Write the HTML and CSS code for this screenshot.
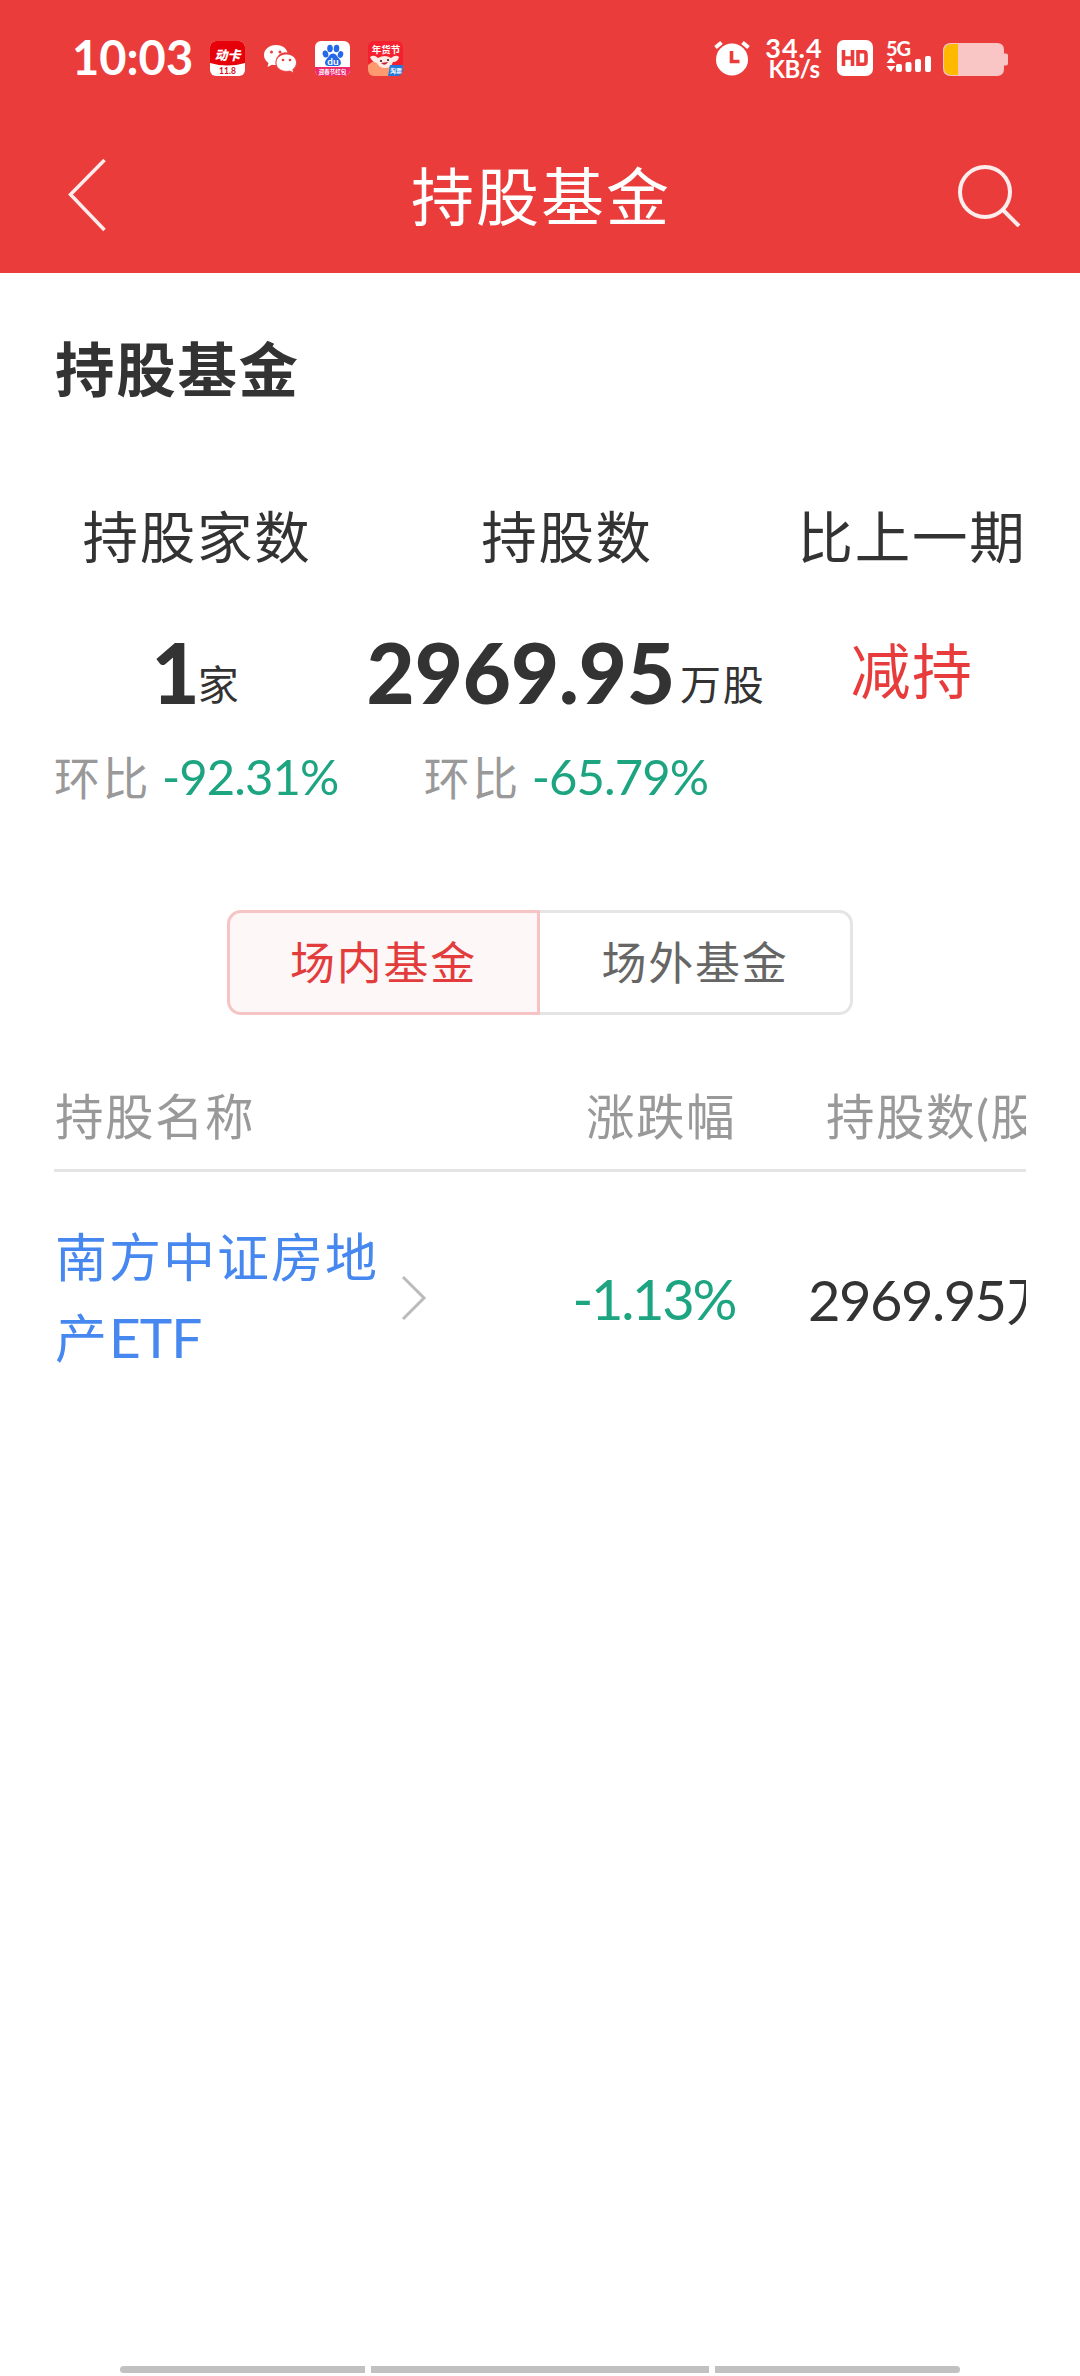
FILE: index.html
```html
<!DOCTYPE html>
<html lang="zh-CN">
<head>
<meta charset="utf-8">
<title>持股基金</title>
<link rel="stylesheet" href="styles.css">
</head>
<body>
<header class="header">
  <div class="status">
    <div class="status-left">
      <span class="clock">10:03</span>
      <svg class="app" viewBox="0 0 35 35">
        <clipPath id="r"><rect width="35" height="35" rx="6"/></clipPath>
        <g clip-path="url(#r)">
          <rect width="35" height="35" fill="#fff"/>
          <path d="M0 0h35v22q-17.500 5-35 0z" fill="#e60009"/>
          <text x="17.500" y="18.500" class="t-dong">动卡</text>
          <text x="17.500" y="33" class="t-eleven">11.8</text>
        </g>
      </svg>
      <svg class="app" viewBox="0 0 35 35">
        <path d="M13 4C6 4 1 8.500 1 14c0 3.500 1.800 6 4.500 8L4.500 26l4.500-2.300c1.300.3 2.600.4 4 .3a10 10 0 0 1 11.500-12.500C23.500 7 19 4 13 4z" fill="#fff"/>
        <path d="M23.500 13c-6 0-10.500 3.800-10.500 8.700s4.500 8.700 10.500 8.700c1.200 0 2.300-.1 3.300-.4l4 2-1-3.500c2.300-1.700 3.700-4 3.700-6.800 0-4.900-4.500-8.700-10-8.700z" fill="#fff" stroke="#eb3c3c" stroke-width=".9"/>
        <g fill="#eb3c3c"><circle cx="8.500" cy="11" r="1.500"/><circle cx="17" cy="11" r="1.500"/><circle cx="20" cy="19" r="1.300"/><circle cx="27" cy="19" r="1.300"/></g>
      </svg>
      <svg class="app" viewBox="0 0 35 35">
        <g clip-path="url(#r)">
          <rect width="35" height="35" fill="#fff"/>
          <g fill="#2468e8">
            <ellipse cx="10.500" cy="13" rx="2.800" ry="3.600" transform="rotate(-15 10.500 13)"/>
            <ellipse cx="15" cy="7.500" rx="2.800" ry="3.700"/>
            <ellipse cx="21.500" cy="7.500" rx="2.800" ry="3.700" transform="rotate(8 21.500 7.500)"/>
            <ellipse cx="25.500" cy="13.500" rx="2.700" ry="3.400" transform="rotate(15 25.500 13.500)"/>
            <path d="M18 12.500c3 0 4 3 6 5 3 3 2.500 7.500-1.500 7.500h-9c-4 0-4.500-4.500-1.500-7.500 2-2 3-5 6-5z"/>
          </g>
          <text x="18" y="23.500" class="t-du">du</text>
          <path d="M0 26h35v9h-35z" fill="#ee2a6c"/>
          <text x="17.500" y="33.200" class="t-band">迎春节红包</text>
        </g>
      </svg>
      <svg class="app" viewBox="0 0 35 35">
        <g clip-path="url(#r)">
          <rect width="35" height="35" fill="#f5202f"/>
          <path d="M0 24q9-8 18-4l10 15h-28z" fill="#ff9a70"/>
          <path d="M2 16q4-3 8 1 7-4 13 0 5-4 8-1-1 5-6 5-2 6-8 6t-8-5q-5-1-7-6z" fill="#ffe9e4"/>
          <circle cx="13" cy="20" r="1.100" fill="#222"/><circle cx="20" cy="19" r="1.100" fill="#222"/>
          <path d="M13 22q4 4 7-1z" fill="#c21f35"/>
          <text x="18" y="12" class="t-year">年货节</text>
          <path d="M22 24h13v11h-15z" fill="#2479dc"/>
          <text x="28" y="31.500" class="t-blue">淘票</text>
        </g>
      </svg>
    </div>
    <div class="status-right">
      <svg class="alarm" viewBox="0 0 36 36">
        <circle cx="18" cy="19.500" r="16" fill="#fff"/>
        <path d="M1.500 7.500 7.500 2.500M34.500 7.500 28.500 2.500" stroke="#fff" stroke-width="4"/>
        <path d="M17.500 11v10.500h8" stroke="#eb3c3c" stroke-width="3.600" fill="none"/>
      </svg>
      <span class="speed"><b>34.4</b><b class="unit-kb">KB/s</b></span>
      <svg class="hd" viewBox="0 0 36 36">
        <rect width="36" height="36" rx="7" fill="#fff"/>
        <path d="M6.500 10v16M15.500 10v16M6.500 18h9M21 11.800h5.500q2.500 0 2.500 2.500v7.400q0 2.500-2.500 2.500h-5.500z" stroke="#eb3c3c" stroke-width="3.600" fill="none"/>
      </svg>
      <svg class="signal" viewBox="0 0 46 36">
        <text x="0" y="16" class="t-5g">5G</text>
        <path d="M0.500 23 5 17.500 9.500 23zM0.500 26h9L5 31.500z" fill="#fff"/>
        <g fill="#fff"><rect x="10" y="24" width="6" height="8" rx="2"/><rect x="19.500" y="22" width="6" height="10" rx="2"/><rect x="29" y="19" width="6" height="13" rx="2"/><rect x="39" y="16" width="6" height="16" rx="2"/></g>
      </svg>
      <svg class="battery" viewBox="0 0 65 33">
        <path d="M8 0h46q7 0 7 7v3.500h2q2 0 2 2v8q0 2-2 2h-2v3.500q0 7-7 7h-46q-8 0-8-8v-17q0-8 8-8z" fill="#f9c5c5"/>
        <path d="M15 1v31H9q-8 0-8-8V9q0-8 8-8z" fill="#ffba00"/>
      </svg>
    </div>
  </div>
  <nav class="nav">
    <svg class="back" viewBox="0 0 40 74"><path d="M37.500 2 3.500 36.500 37.500 72" fill="none" stroke="#fff" stroke-opacity=".9" stroke-width="3.500"/></svg>
    <h1 class="title">持股基金</h1>
    <svg class="search" viewBox="0 0 64 64"><circle cx="28" cy="29" r="25" fill="none" stroke="#fff" stroke-opacity=".9" stroke-width="4"/><path d="M45.500 46.500 62 63" stroke="#fff" stroke-opacity=".9" stroke-width="4"/></svg>
  </nav>
</header>

<main class="content">
  <h2 class="heading">持股基金</h2>
  <section class="summary">
    <div class="stat">
      <div class="label">持股家数</div>
      <div class="value"><span class="num one">1</span><span class="unit">家</span></div>
      <div class="ratio">环比<span class="pct">-92.31%</span></div>
    </div>
    <div class="stat">
      <div class="label">持股数</div>
      <div class="value"><span class="num">2969.95</span><span class="unit">万股</span></div>
      <div class="ratio">环比<span class="pct">-65.79%</span></div>
    </div>
    <div class="stat">
      <div class="label">比上一期</div>
      <div class="change">减持</div>
    </div>
  </section>

  <div class="tabs">
    <div class="tab active">场内基金</div>
    <div class="tab">场外基金</div>
  </div>

  <section class="table">
    <div class="row head">
      <div>持股名称</div>
      <div class="right">涨跌幅</div>
      <div class="last">持股数(股)</div>
    </div>
    <div class="row body">
      <div class="name">
        <a class="link">南方中证房地产<span class="latin">ETF</span></a>
        <svg class="arrow" viewBox="0 0 26 48"><path d="M2 3 23 24 2 45" fill="none" stroke="#bbb" stroke-width="3"/></svg>
      </div>
      <div class="right green">-1.13%</div>
      <div class="amount">2969.95<span class="wan">万</span></div>
    </div>
  </section>
</main>

<footer class="gesture"><i class="side"></i><i class="mid"></i><i class="side end"></i></footer>
</body>
</html>
```
FILE: styles.css
```css
* { box-sizing: border-box; }
body {
  margin: 0;
  width: 1080px;
  height: 2376px;
  display: flex;
  flex-direction: column;
  overflow: hidden;
  background: #fff;
  color: #333;
  font-family: Lato, "Noto Sans CJK SC", sans-serif;
}
svg { display: block; flex: none; }

.header { height: 273px; background: #eb3c3c; color: #fff; }
.status {
  height: 116px;
  padding: 0 72px;
  display: flex;
  justify-content: space-between;
  align-items: center;
}
.status-left { display: flex; align-items: center; gap: 17.5px; }
.clock { width: 120.500px; font-size: 47px; font-weight: 700; line-height: 56px; margin-top: -2px; }
.app { width: 35px; height: 35px; }
.status-right { display: flex; align-items: center; }
.alarm { width: 36px; height: 36px; margin-right: 14px; }
.speed { width: 60px; margin-right: 13px; display: flex; flex-direction: column; align-items: center; }
.speed b { font-size: 27px; line-height: 21px; letter-spacing: 1px; }
.speed .unit-kb { font-size: 24px; letter-spacing: -0.500px; }
.hd { width: 36px; height: 36px; margin-right: 13px; }
.signal { width: 46px; height: 36px; margin-right: 11px; }
.battery { width: 65px; height: 33px; margin-top: 3px; }
text { font-family: Lato, "Noto Sans CJK SC", sans-serif; text-anchor: middle; font-weight: 700; fill: #fff; }
.t-dong { font-size: 13px; font-style: italic; font-weight: 900; }
.t-eleven { font-size: 8.500px; fill: #d8101c; }
.t-du { font-size: 10px; }
.t-band { font-size: 5.500px; }
.t-year { font-size: 9.500px; }
.t-blue { font-size: 6px; }
.t-5g { font-size: 20px; text-anchor: start; letter-spacing: -1px; }

.nav {
  height: 157px;
  padding: 0 59px 0 67px;
  display: flex;
  align-items: center;
  justify-content: space-between;
}
.back { width: 40px; height: 74px; }
.title { margin: 2px -18px 0 0; font-size: 63px; font-weight: 400; line-height: 70px; letter-spacing: 2px; }
.search { width: 64px; height: 64px; }

.content { flex: 1; padding: 66px 54px 0; }
.heading { margin: 0; font-size: 59.500px; font-weight: 700; line-height: 60px; letter-spacing: 1.700px; padding-left: 1px; }
.summary {
  margin-top: 108px;
  height: 300px;
  display: grid;
  grid-template-columns: 284px 396px 234px;
  column-gap: 30px;
}
.stat { text-align: center; white-space: nowrap; }
.label { font-size: 55.500px; line-height: 60px; letter-spacing: 1.700px; padding-left: 2px; }
.value { margin-top: 62px; height: 84px; display: flex; justify-content: center; align-items: baseline; }
.num { font-size: 83px; font-weight: 900; line-height: 86px; }
.num.one { margin-right: -7px; }
.unit { margin-left: 5px; font-size: 41px; line-height: 60px; letter-spacing: 1.700px; transform: translateY(-4px); }
.ratio { margin-top: 34px; font-size: 46px; line-height: 58px; letter-spacing: 2.500px; color: #999; }
.pct { margin-left: 11px; font-size: 49px; letter-spacing: -0.900px; color: #1da481; }
.change { margin-top: 62px; font-size: 60px; line-height: 84px; letter-spacing: 1.500px; padding-left: 2px; color: #e83c3c; }

.tabs {
  width: 626px;
  height: 105px;
  margin: 103px auto 0;
  display: grid;
  grid-template-columns: 1fr 1fr;
}
.tab {
  height: 105px;
  border: 3px solid #e5e5e5;
  border-left: 0;
  border-radius: 0 14px 14px 0;
  text-align: center;
  font-size: 45px;
  line-height: 101px;
  letter-spacing: 1.800px;
  color: #666;
}
.tab.active { border: 3px solid #f6c4c4; border-radius: 14px 0 0 14px; background: #fef7f7; color: #e23c3c; }

.table { margin-top: 71px; overflow: hidden; white-space: nowrap; }
.row { width: 1010px; display: grid; grid-template-columns: 390px 291px 329px; align-items: center; }
.head {
  height: 86px;
  padding-bottom: 23px;
  border-bottom: 3px solid #e5e5e5;
  font-size: 48.500px;
  line-height: 58px;
  letter-spacing: 1.500px;
  color: #999;
  padding-left: 1px;
}
.right { text-align: right; }
.last { padding-left: 90px; }
.body { margin-top: 45px; height: 162px; font-size: 56px; letter-spacing: -1.500px; }
.name { display: flex; align-items: center; gap: 20px; }
.link { width: 328px; padding-left: 1px; font-size: 52px; line-height: 81px; letter-spacing: 2px; white-space: normal; word-break: break-all; color: #4688f0; }
.latin { font-size: 55px; line-height: 60px; letter-spacing: -1px; }
.arrow { width: 26px; height: 48px; margin-left: -1px; }
.green { letter-spacing: -2.300px; color: #1da481; }
.amount { padding-left: 73px; }
.wan { font-size: 53px; margin-left: 1px; }

.gesture { height: 10px; padding: 0 120px; display: flex; gap: 6px; }
.gesture i { height: 7px; background: #c1c1c1; }
.side { width: 245px; border-radius: 4px 0 0 4px; }
.side.end { border-radius: 0 4px 4px 0; }
.mid { width: 338px; }
```
